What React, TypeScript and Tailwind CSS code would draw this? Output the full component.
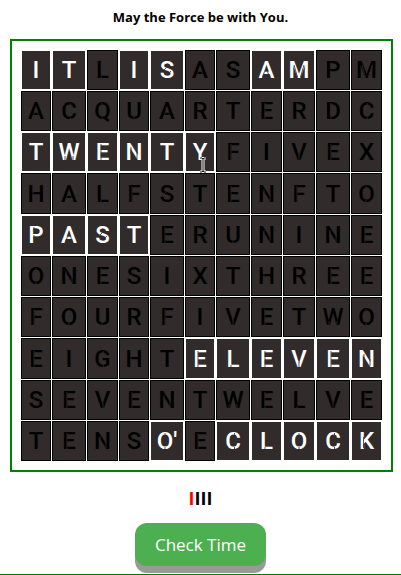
import React from "react";

const rows: string[][] = [
  "ITLISASAMPM",
  "ACQUARTERDC",
  "TWENTYFIVEX",
  "HALFSTENFTO",
  "PASTERUNINE",
  "ONESIXTHREE",
  "FOURFIVETWO",
  "EIGHTELEVEN",
  "SEVENTWELVE",
  "TENSOECLOCK",
].map((row) => row.split(""));
rows[9][4] = "O'";

const lit: number[][] = [
  [0, 1, 3, 4, 7, 8],
  [],
  [0, 1, 2, 3, 4, 5],
  [],
  [0, 1, 2, 3],
  [],
  [],
  [5, 6, 7, 8, 9, 10],
  [],
  [4, 6, 7, 8, 9, 10],
];

const columns = [
  "w-[30px]", "w-[34px]", "w-[31px]", "w-[30px]", "w-[34px]", "w-[30px]",
  "w-[34px]", "w-[31px]", "w-[32px]", "w-[34px]", "w-[31px]",
];

// Breaks of the stencil lettering, on a 20x18 grid centred on the letter.
const cuts: Record<string, string> = {
  A: "M8.5 9.5L6.5 15M11.5 9.5L13.5 15",
  C: "M11.5 0V4M11.5 14V18",
  D: "M8 0V4M8 14V18",
  E: "M8 0V18",
  F: "M8 0V18",
  G: "M11.5 0V4M11.5 14V18",
  H: "M7 6V12",
  K: "M7.5 4V15",
  L: "M8 14V18",
  M: "M5 3L8.5 15M15 3L11.5 15",
  N: "M7 3V10M13 8V15",
  O: "M10 0V4M10 14V18",
  "O'": "M8 0V4M8 14V18",
  P: "M8 0V3.5M8 8V12",
  Q: "M10 0V4M10 14V16",
  R: "M8 0V3.5M8 8V12",
  S: "M6 9L9 6M11 12L14 9",
  U: "M10 14V18",
  V: "M10 11V18",
  W: "M6 12V18M14 12V18",
};

function Letter({ text, on }: { text: string; on: boolean }) {
  return (
    <td
      className={`border p-0 text-center align-middle ${
        on ? "border-white text-white" : "border-black text-black"
      } bg-[#312b2b]`}
    >
      <span className="relative inline-block font-[Roboto,sans-serif] text-2xl leading-8 font-medium">
        {text}
        {cuts[text] && (
          <svg
            viewBox="0 0 20 18"
            aria-hidden="true"
            className="absolute top-2 left-1/2 h-[18px] w-5 max-w-none -translate-x-1/2"
          >
            <path d={cuts[text]} fill="none" stroke="#312b2b" strokeWidth="0.8" />
          </svg>
        )}
      </span>
    </td>
  );
}

export default function App() {
  return (
    <main className="bg-white text-center font-['Open_Sans','Noto_Sans',sans-serif] text-black">
      <h1 className="pt-2 text-[13px] leading-[18px] font-bold">May the Force be with You.</h1>
      <section className="mx-[10px] mt-[13px] mr-2 border-2 border-[#008000] p-2">
        <table className="w-full table-fixed border-separate border-spacing-px">
          <colgroup>
            {columns.map((width, i) => (
              <col key={i} className={width} />
            ))}
          </colgroup>
          <tbody>
            {rows.map((row, r) => (
              <tr key={r} className={r === 3 || r === 7 ? "h-[41px]" : "h-10"}>
                {row.map((text, c) => (
                  <Letter key={c} text={text} on={lit[r].includes(c)} />
                ))}
              </tr>
            ))}
          </tbody>
        </table>
      </section>
      <p className="mt-4 text-lg leading-5 font-bold">
        <span className="text-[#ff0000]">I</span>III
      </p>
      <button
        type="button"
        className="mt-[15px] h-[43px] rounded-xl bg-[#4caf50] px-5 text-[17px] text-white shadow-[0_7px_#999]"
      >
        Check Time
      </button>
      <hr className="mt-2 border-t border-[#008000]" />
      <svg
        viewBox="0 0 8 16"
        aria-hidden="true"
        className="pointer-events-none absolute top-[157px] left-[199px] h-4 w-2"
      >
        <path d="M1 1H3L4 2L5 1H7M4 2V14M1 15H3L4 14L5 15H7" fill="none" stroke="#fff" strokeWidth="3" />
        <path d="M1 1H3L4 2L5 1H7M4 2V14M1 15H3L4 14L5 15H7" fill="none" stroke="#111" strokeWidth="1" />
      </svg>
    </main>
  );
}
